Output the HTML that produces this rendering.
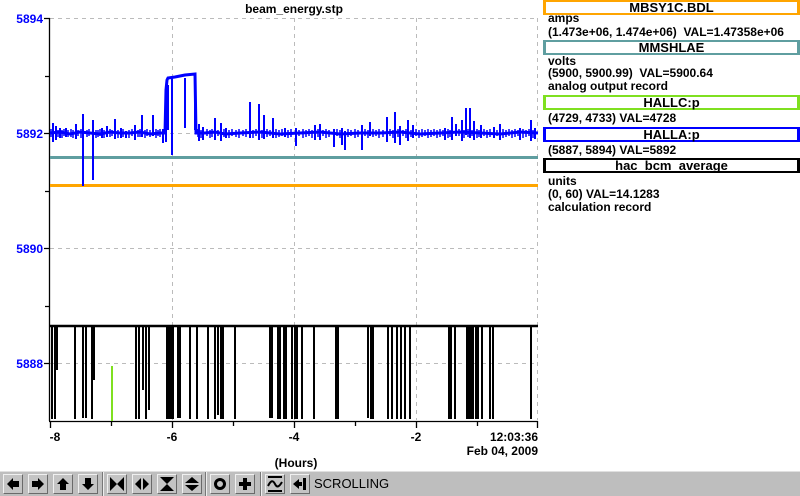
<!DOCTYPE html>
<html><head><style>
body{margin:0;width:800px;height:495px;background:#fff;overflow:hidden;position:relative;font-family:"Liberation Sans",sans-serif;}
.t{position:absolute;font-size:12px;font-weight:bold;color:#000;white-space:nowrap;line-height:13px;}
.box{position:absolute;left:543px;width:251px;height:11px;border-style:solid;border-width:2px 3px;font-size:13px;font-weight:bold;text-align:center;line-height:11px;}
.tb{position:absolute;left:0;top:471px;width:800px;height:24px;background:#bebebe;border-top:1px solid #e0e0e0;}
.b{position:absolute;top:2px;width:18px;height:18px;background:#c4c4c4;border-top:1px solid #f0f0f0;border-left:1px solid #f0f0f0;border-right:1px solid #6a6a6a;border-bottom:1px solid #6a6a6a;}
.b svg{position:absolute;left:1px;top:1px}
.sep{position:absolute;top:0;width:1px;height:24px;background:#777;border-right:1px solid #eee}
</style></head><body>
<svg width="800" height="470" style="position:absolute;left:0;top:0">
<g stroke="#bbb" stroke-dasharray="4,4" stroke-width="1">
<path d="M50 18.5H538M50 133.5H538M50 248.5H538M50 363.5H538M172.5 18V420M294.5 18V420M416.5 18V420M537.5 18V420"/>
</g>
<g stroke="#000" stroke-width="1.3" fill="none">
<path d="M49.5 18V421M44 18.5H50M45 76.5H50M44 133.5H50M45 191.5H50M44 248.5H50M45 306.5H50M44 363.5H50M49 421.5H538M50.5 421V428M111.5 421V426M172.5 421V428M233.5 421V426M294.5 421V428M355.5 421V426M416.5 421V428M477.5 421V426M537.5 421V428"/>
</g>
<path d="M50 157.5H538" stroke="#5f9ea0" stroke-width="3"/>
<path d="M50 185.5H538" stroke="#ffa500" stroke-width="3"/>
<g stroke="#00f" fill="none">
<path stroke-width="3" d="M50 133L60 132L70 134L80 132L90 133L100 134L110 132L120 133L130 133L140 132L150 134L160 133L165 133L166 90L167 80L168 78L175 77L180 76L185 75L195 74L196 133L205 133L215 132L225 134L240 133L260 132L280 134L300 133L320 132L340 134L360 133L380 133L400 132L420 134L440 133L460 132L480 133L500 134L520 132L538 133"/>
<path stroke-width="2" d="M53 123V142M56 126V140M60 128V138M66 128V137M76 124V139M83 114V186M93 120V180M102 128V138M107 126V137M115 119V139M121 128V138M126 131V138M135 125V140M142 115V137M153 115V136M163 129V143M166 90V142M168 85V130M172 78V155M185 78V128M195 75V130M199 124V141M203 127V140M215 118V140M221 123V141M226 128V138M250 102V138M259 104V140M264 115V139M273 118V138M285 128V137M296 128V146M315 125V140M320 124V140M334 129V147M342 128V145M345 131V150M362 125V150M370 122V136M387 117V142M395 112V143M400 126V145M408 120V141M413 125V138M445 128V140M452 117V140M456 124V136M462 120V141M466 108V135M470 108V138M474 121V140M481 125V138M494 127V138M500 124V140M520 128V140M531 120V141M535 128V139"/>
<path stroke-width="1.5" d="M51 129V137M58 130V137M62 130V138M64 129V136M68 130V137M71 129V137M73 130V138M78 130V136M81 129V138M87 130V137M89 129V136M96 130V138M98 130V137M100 129V136M104 130V138M110 129V137M112 130V136M118 130V138M123 129V137M129 130V138M132 129V136M138 130V137M140 129V137M145 130V138M147 129V136M150 130V137M156 129V138M158 130V136M160 129V137M198 129V137M201 130V138M207 129V136M210 130V138M212 129V137M218 130V136M224 129V137M229 130V138M232 129V136M236 130V137M239 129V138M243 130V136M246 129V137M253 130V138M256 129V136M262 130V138M267 129V137M270 130V136M276 129V138M279 130V137M282 129V136M288 130V138M291 129V137M299 130V136M303 129V138M306 130V137M309 129V136M312 130V138M318 129V137M323 130V136M326 129V138M329 130V137M337 129V136M340 130V138M348 129V137M351 130V136M355 129V138M358 130V137M365 129V136M368 130V138M373 129V137M376 130V136M379 129V138M383 130V137M390 129V136M393 130V138M398 129V137M403 130V136M406 129V138M411 130V137M416 129V136M419 130V138M422 129V137M425 130V136M428 129V138M431 130V137M434 129V136M437 130V138M440 129V137M443 130V136M448 129V138M450 130V137M459 129V136M464 130V138M468 129V137M472 130V136M477 129V138M479 130V137M484 129V136M487 130V138M490 129V137M497 130V136M503 129V138M506 130V137M509 129V136M512 130V138M515 129V137M518 130V136M523 129V138M526 130V137M529 129V136M533 130V138"/>
</g>
<path d="M112 366V421" stroke="#7fe020" stroke-width="2"/>
<g stroke="#000" fill="none">
<path stroke-width="2.5" d="M50 326H538"/>
<path stroke-width="2" d="M52 325V419M55 325V419M57 326V370M75 326V419M83 326V418M86 326V418M92 326V419M94 326V380M136 326V419M139 326V419M143 326V390M146 326V419M149 326V410M167 326V419M169 326V419M171 326V419M173 326V419M178 326V418M180 326V418M190 326V419M197 326V419M208 326V419M215 326V419M218 326V415M221 326V419M223 326V419M235 326V419M270 326V418M272 326V418M278 326V419M280 326V419M284 326V419M286 326V419M292 326V419M295 326V419M297 326V419M302 326V419M314 326V419M336 326V419M338 326V419M368 326V418M371 326V419M373 326V419M388 326V419M392 326V419M397 326V419M401 326V419M405 326V419M410 326V419M449 326V419M451 326V419M455 326V419M467 326V419M469 326V419M471 326V419M473 326V419M476 326V419M478 326V419M482 326V419M490 326V419M493 326V419M531 326V419"/>
</g>
<g font-family="Liberation Sans,sans-serif" font-size="12" font-weight="bold">
<text x="43" y="23" fill="#00f" text-anchor="end">5894</text>
<text x="43" y="138" fill="#00f" text-anchor="end">5892</text>
<text x="43" y="253" fill="#00f" text-anchor="end">5890</text>
<text x="43" y="368" fill="#00f" text-anchor="end">5888</text>
<text x="294" y="13" text-anchor="middle">beam_energy.stp</text>
<text x="55" y="441" text-anchor="middle">-8</text>
<text x="172" y="441" text-anchor="middle">-6</text>
<text x="294" y="441" text-anchor="middle">-4</text>
<text x="416" y="441" text-anchor="middle">-2</text>
<text x="538" y="441" text-anchor="end">12:03:36</text>
<text x="538" y="455" text-anchor="end">Feb 04, 2009</text>
<text x="296" y="467" text-anchor="middle">(Hours)</text>
</g>
</svg>
<div class="box" style="top:0;border-color:#ffa500">MBSY1C.BDL</div>
<div class="t" style="left:548px;top:12px">amps</div>
<div class="t" style="left:548px;top:26px">(1.473e+06, 1.474e+06)&nbsp; VAL=1.47358e+06</div>
<div class="box" style="top:40px;border-color:#5f9ea0">MMSHLAE</div>
<div class="t" style="left:548px;top:55px">volts</div>
<div class="t" style="left:548px;top:67px">(5900, 5900.99)&nbsp; VAL=5900.64</div>
<div class="t" style="left:548px;top:80px">analog output record</div>
<div class="box" style="top:95px;border-color:#7fe020">HALLC:p</div>
<div class="t" style="left:548px;top:112px">(4729, 4733) VAL=4728</div>
<div class="box" style="top:127px;border-color:#00f">HALLA:p</div>
<div class="t" style="left:548px;top:144px">(5887, 5894) VAL=5892</div>
<div class="box" style="top:158px;border-color:#000">hac_bcm_average</div>
<div class="t" style="left:548px;top:175px">units</div>
<div class="t" style="left:548px;top:188px">(0, 60) VAL=14.1283</div>
<div class="t" style="left:548px;top:201px">calculation record</div>
<div class="tb">
<div class="b" style="left:3px"><svg width="16" height="16"><path d="M2 8L8 2V5H14V11H8V14Z"/></svg></div>
<div class="b" style="left:28px"><svg width="16" height="16"><path d="M14 8L8 2V5H2V11H8V14Z"/></svg></div>
<div class="b" style="left:53px"><svg width="16" height="16"><path d="M8 2L14 8H11V14H5V8H2Z"/></svg></div>
<div class="b" style="left:78px"><svg width="16" height="16"><path d="M8 14L14 8H11V2H5V8H2Z"/></svg></div>
<div class="sep" style="left:102px"></div>
<div class="b" style="left:107px"><svg width="16" height="16"><path d="M1 1L8 8L1 15ZM15 1L8 8L15 15Z"/></svg></div>
<div class="b" style="left:132px"><svg width="16" height="16"><path d="M7 2L1 8L7 14ZM9 2L15 8L9 14Z"/></svg></div>
<div class="b" style="left:157px"><svg width="16" height="16"><path d="M1 1H15L8 8ZM1 15H15L8 8Z"/></svg></div>
<div class="b" style="left:182px"><svg width="16" height="16"><path d="M8 1L15 7H1ZM8 15L15 9H1Z"/></svg></div>
<div class="sep" style="left:205px"></div>
<div class="b" style="left:210px"><svg width="16" height="16"><circle cx="8" cy="8" r="4.5" fill="none" stroke="#000" stroke-width="3"/></svg></div>
<div class="b" style="left:235px"><svg width="16" height="16"><path d="M6 2H10V6H14V10H10V14H6V10H2V6H6Z"/></svg></div>
<div class="sep" style="left:260px"></div>
<div class="b" style="left:265px"><svg width="16" height="16"><path d="M1 1H15M1 15H15" stroke="#000" stroke-width="2"/><path d="M1 10C4 4 6 4 8 8S12 11 15 6" fill="none" stroke="#000" stroke-width="2"/></svg></div>
<div class="b" style="left:290px"><svg width="16" height="16"><path d="M1 8L7 3V6H10V10H7V13Z M11 2H14V14H11Z"/></svg></div>
<div style="position:absolute;left:314px;top:4px;font-size:13px;color:#000">SCROLLING</div>
</div>
</body></html>
